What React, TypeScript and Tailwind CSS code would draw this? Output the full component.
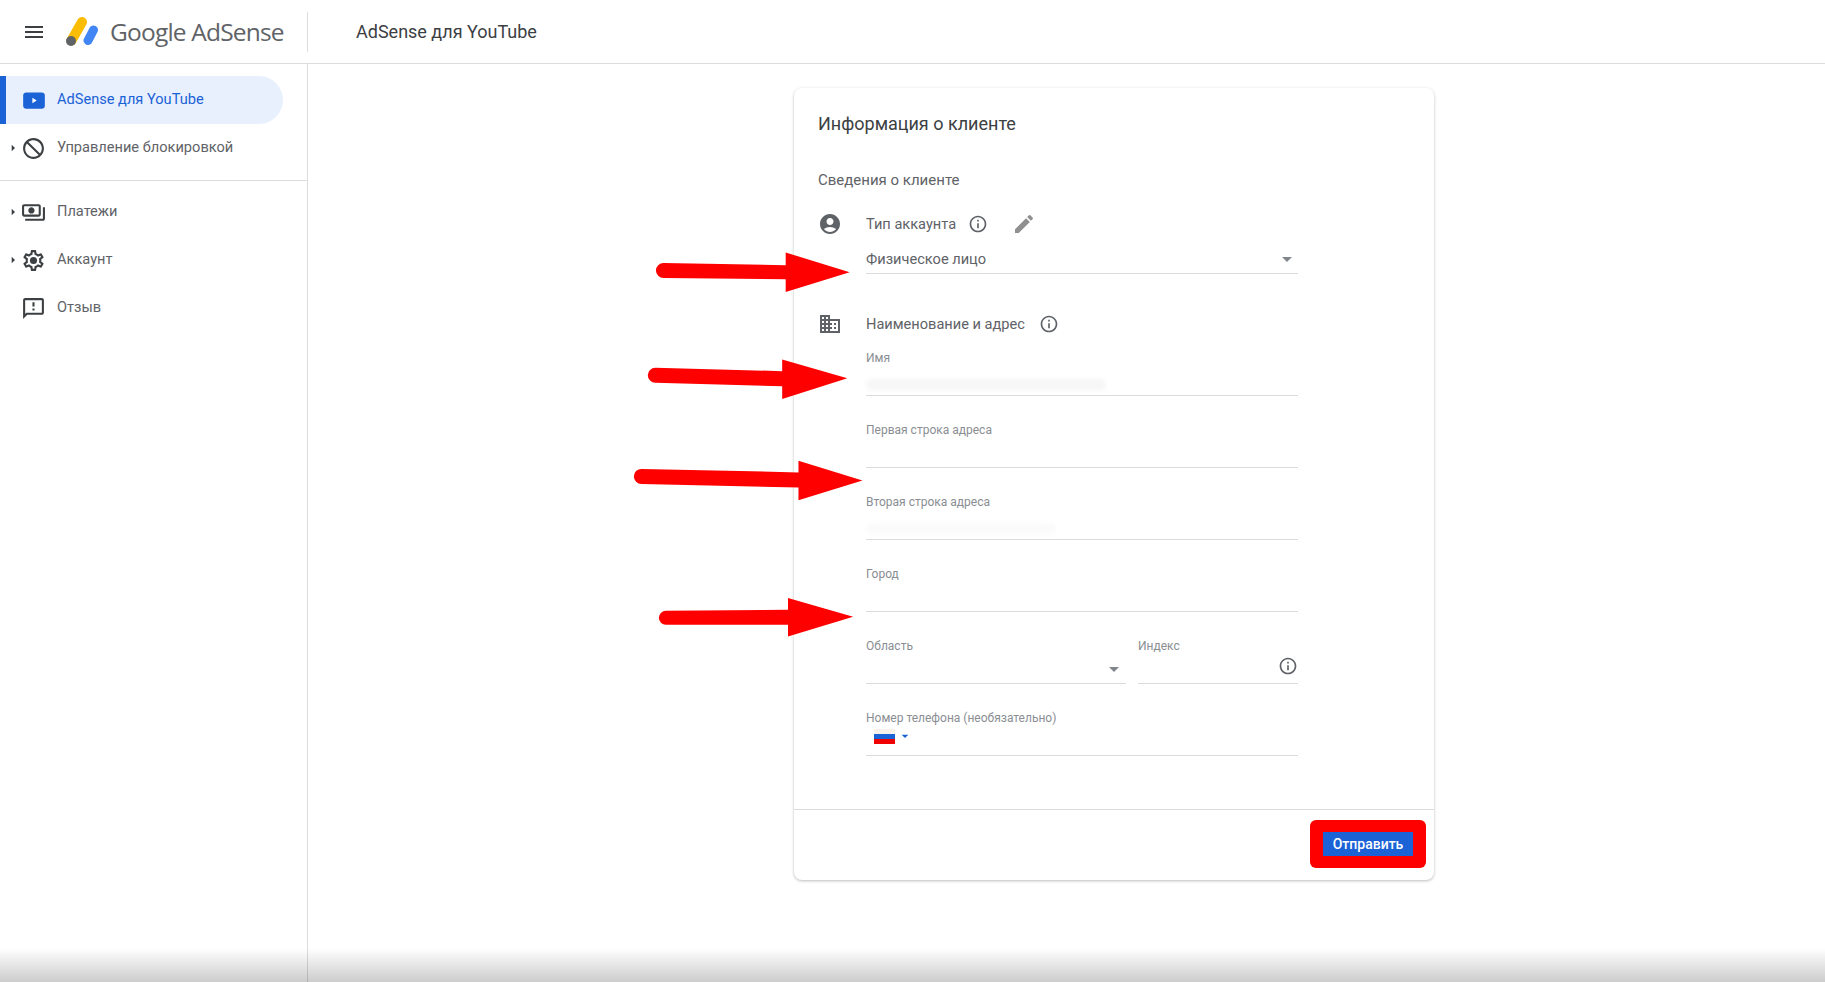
import React from "react";
import { MdBlock, MdOutlinePayments, MdOutlineFeedback, MdAccountCircle, MdDomain, MdEdit, MdInfoOutline, MdMenu, MdArrowDropDown, MdArrowRight } from "react-icons/md";

function Logo() {
  return (
    <svg width="34" height="30" viewBox="0 0 34 30" fill="none">
      <path d="M6.5 23.5 L17 5" stroke="#fbbc04" strokeWidth="10" strokeLinecap="round" />
      <path d="M23 23.5 L28.5 13" stroke="#4285f4" strokeWidth="9" strokeLinecap="round" />
      <circle cx="6" cy="24" r="5" fill="#5f6368" />
    </svg>
  );
}

function GearIcon() {
  return (
    <svg width="25" height="25" viewBox="0 0 24 24" fill="currentColor">
      <path d="M19.43 12.98c.04-.32.07-.64.07-.98 0-.34-.03-.66-.07-.98l2.11-1.65c.19-.15.24-.42.12-.64l-2-3.46c-.09-.16-.26-.25-.44-.25-.06 0-.12.01-.17.03l-2.49 1c-.52-.4-1.08-.73-1.69-.98l-.38-2.65C14.46 2.18 14.25 2 14 2h-4c-.25 0-.46.18-.49.42l-.38 2.65c-.61.25-1.17.59-1.69.98l-2.49-1c-.06-.02-.12-.03-.18-.03-.17 0-.34.09-.43.25l-2 3.46c-.13.22-.07.49.12.64l2.11 1.65c-.04.32-.07.65-.07.98 0 .33.03.66.07.98l-2.11 1.65c-.19.15-.24.42-.12.64l2 3.46c.09.16.26.25.44.25.06 0 .12-.01.17-.03l2.49-1c.52.4 1.08.73 1.69.98l.38 2.65c.03.24.24.42.49.42h4c.25 0 .46-.18.49-.42l.38-2.65c.61-.25 1.17-.59 1.69-.98l2.49 1c.06.02.12.03.18.03.17 0 .34-.09.43-.25l2-3.46c.12-.22.07-.49-.12-.64l-2.11-1.65zm-1.98-1.71c.04.31.05.52.05.73 0 .21-.02.43-.05.73l-.14 1.13.89.7 1.08.84-.7 1.21-1.27-.51-1.04-.42-.9.68c-.43.32-.84.56-1.25.73l-1.06.43-.16 1.13-.2 1.35h-1.4l-.19-1.35-.16-1.13-1.06-.43c-.43-.18-.83-.41-1.23-.71l-.91-.7-1.06.43-1.27.51-.7-1.21 1.08-.84.89-.7-.14-1.13c-.03-.31-.05-.54-.05-.74s.02-.43.05-.73l.14-1.13-.89-.7-1.08-.84.7-1.21 1.27.51 1.04.42.9-.68c.43-.32.84-.56 1.25-.73l1.06-.43.16-1.13.2-1.35h1.39l.19 1.35.16 1.13 1.06.43c.43.18.83.41 1.23.71l.91.7 1.06-.43 1.27-.51.7 1.21-1.07.85-.89.7.14 1.13z" />
      <circle cx="12" cy="12" r="3.4" />
    </svg>
  );
}

function NavRow({ icon, label, caret }: { icon: React.ReactNode; label: string; caret?: boolean }) {
  return (
    <div className="flex h-12 items-center text-[14.6px] text-[#5f6368]">
      <div className="flex w-[21px] items-center justify-end pr-[1px] text-[#3c4043]">
        {caret && <MdArrowRight size={16} className="-mr-[1px]" />}
      </div>
      <div className="flex w-[36px] text-[#3c4043]">{icon}</div>
      <span className="-mt-[1px]">{label}</span>
    </div>
  );
}

function Field({ label, smudge }: { label: string; smudge?: string }) {
  return (
    <div className="mb-[25px] flex h-[47px] flex-col border-b border-[#dadce0]">
      <span className="mt-[2px] text-[12px] leading-[14px] text-[#8a8e93]">{label}</span>
      {smudge && <div className={"mt-[14px] h-[11px] rounded-full bg-[#f6f6f6] blur-[2px] " + smudge} />}
    </div>
  );
}

export default function App() {
  return (
    <div className="relative flex h-[982px] w-[1825px] flex-col overflow-hidden bg-white font-['Roboto',sans-serif]">
      <header className="flex h-[64px] shrink-0 items-center border-b border-[#dadce0]">
        <div className="flex w-[307px] items-center">
          <MdMenu size={24} className="ml-[22px] text-[#3c4043]" />
          <div className="ml-[19px]"><Logo /></div>
          <span className="ml-[11px] mt-[2px] whitespace-nowrap font-['Open_Sans',sans-serif] text-[24.5px] tracking-[-0.8px] text-[#5f6368]">Google AdSense</span>
        </div>
        <div className="h-[40px] w-px bg-[#dadce0]" />
        <span className="ml-[48px] text-[18px] text-[#3c4043]">AdSense для YouTube</span>
      </header>
      <div className="flex flex-1">
        <aside className="w-[308px] shrink-0 border-r border-[#dadce0] pt-3">
          <div className="flex h-12 w-[283px] items-center rounded-r-full border-l-[6px] border-[#1a62d6] bg-[#e8f0fe] text-[14.6px] text-[#1a62d6]">
            <div className="ml-[15px] flex w-[36px]">
              <svg width="26" height="26" viewBox="0 0 24 24">
                <rect x="2" y="5" width="20" height="15" rx="3" fill="#1a62d6" />
                <path d="M10.5 10 L14.5 12.5 L10.5 15 Z" fill="#fff" />
              </svg>
            </div>
            <span className="-mt-[1px]">AdSense для YouTube</span>
          </div>
          <NavRow caret icon={<MdBlock size={25} className="-scale-x-100" />} label="Управление блокировкой" />
          <div className="mt-2 mb-[7px] border-t border-[#dadce0]" />
          <NavRow caret icon={<MdOutlinePayments size={25} />} label="Платежи" />
          <NavRow caret icon={<GearIcon />} label="Аккаунт" />
          <NavRow icon={<MdOutlineFeedback size={25} />} label="Отзыв" />
        </aside>
        <main className="flex-1 pt-6 pl-[486px]">
          <div className="w-[640px] rounded-lg bg-white shadow-[0_1px_3px_rgba(60,64,67,0.35)]">
            <div className="h-[721px] pt-[24px] pl-6 text-[#3c4043]">
              <h1 className="text-[18px] leading-6">Информация о клиенте</h1>
              <h2 className="mt-[34px] text-[15px] leading-5 text-[#5f6368]">Сведения о клиенте</h2>
              <div className="mt-[22px] flex h-6 items-center text-[#5f6368]">
                <MdAccountCircle size={24} />
                <span className="ml-6 mt-[1px] text-[14.6px]">Тип аккаунта</span>
                <MdInfoOutline size={20} className="ml-[12px]" />
                <MdEdit size={24} className="ml-[24px] text-[#909090]" />
              </div>
              <div className="ml-12 w-[432px]">
                <div className="mt-[12px] flex h-[26px] items-start justify-between border-b border-[#dadce0] text-[14.6px] text-[#5f6368]">
                  <span className="mt-[1px] leading-[20px]">Физическое лицо</span>
                  <MdArrowDropDown size={24} className="-mt-[1px] -mr-[1px] text-[#80868b]" />
                </div>
              </div>
              <div className="mt-[38px] flex h-6 items-center text-[#5f6368]">
                <MdDomain size={24} />
                <span className="ml-6 mt-[1px] text-[14.6px]">Наименование и адрес</span>
                <MdInfoOutline size={20} className="ml-[14px]" />
              </div>
              <div className="ml-12 mt-[13px] w-[432px]">
                <Field label="Имя" smudge="w-[240px]" />
                <Field label="Первая строка адреса" />
                <Field label="Вторая строка адреса" smudge="w-[190px] opacity-50" />
                <Field label="Город" />
                <div className="mb-[25px] flex gap-3">
                  <div className="flex h-[47px] w-[260px] flex-col border-b border-[#dadce0]">
                    <span className="mt-[2px] text-[12px] leading-[14px] text-[#8a8e93]">Область</span>
                    <MdArrowDropDown size={24} className="mt-[4px] self-end text-[#80868b]" />
                  </div>
                  <div className="flex h-[47px] flex-1 flex-col border-b border-[#dadce0]">
                    <span className="mt-[2px] text-[12px] leading-[14px] text-[#8a8e93]">Индекс</span>
                    <MdInfoOutline size={20} className="mt-[3px] self-end text-[#5f6368]" />
                  </div>
                </div>
                <div className="flex h-[47px] flex-col border-b border-[#dadce0]">
                  <span className="mt-[2px] text-[12px] leading-[14px] text-[#8a8e93]">Номер телефона (необязательно)</span>
                  <div className="mt-[3px] flex items-center pl-2">
                    <div className="flex h-[15px] w-[21px] flex-col">
                      <div className="flex-1 bg-[#f6f1ea]" />
                      <div className="flex-1 bg-[#1a62d6]" />
                      <div className="flex-1 bg-[#f00000]" />
                    </div>
                    <MdArrowDropDown size={16} className="ml-[2px] text-[#1a62d6]" />
                  </div>
                </div>
              </div>
            </div>
            <div className="flex h-[71px] items-start justify-end border-t border-[#dadce0] pt-[10px] pr-2">
              <div className="flex h-[48px] w-[116px] items-center justify-center rounded-md bg-[#ff0000]">
                <button className="h-6 w-[90px] bg-[#1a62d6] text-[14px] font-medium text-white">Отправить</button>
              </div>
            </div>
          </div>
        </main>
      </div>
      {/* Red annotation arrows painted over the page */}
      <svg className="pointer-events-none absolute top-0 left-0" width="1825" height="982" viewBox="0 0 1568 844">
        <g fill="#ff0000" stroke="none">
          <path d="M570 226 L675 228 L675 217 L730 234 L675 251 L675 240 L570 239 A6.5 6.5 0 0 1 570 226 Z" />
          <path d="M563 316 L672 319 L672 309 L728 325 L672 343 L672 332 L563 329 A6.5 6.5 0 0 1 563 316 Z" />
          <path d="M551 403 L686 406 L686 396 L741 413 L686 430 L686 419 L551 416 A6.5 6.5 0 0 1 551 403 Z" />
          <path d="M572 525 L677 524 L677 514 L733 530 L677 547 L677 537 L572 537 A6 6 0 0 1 572 525 Z" />
        </g>
      </svg>
      <div className="pointer-events-none absolute right-0 bottom-0 left-0 h-[34px] bg-gradient-to-b from-black/0 to-black/20" />
    </div>
  );
}
